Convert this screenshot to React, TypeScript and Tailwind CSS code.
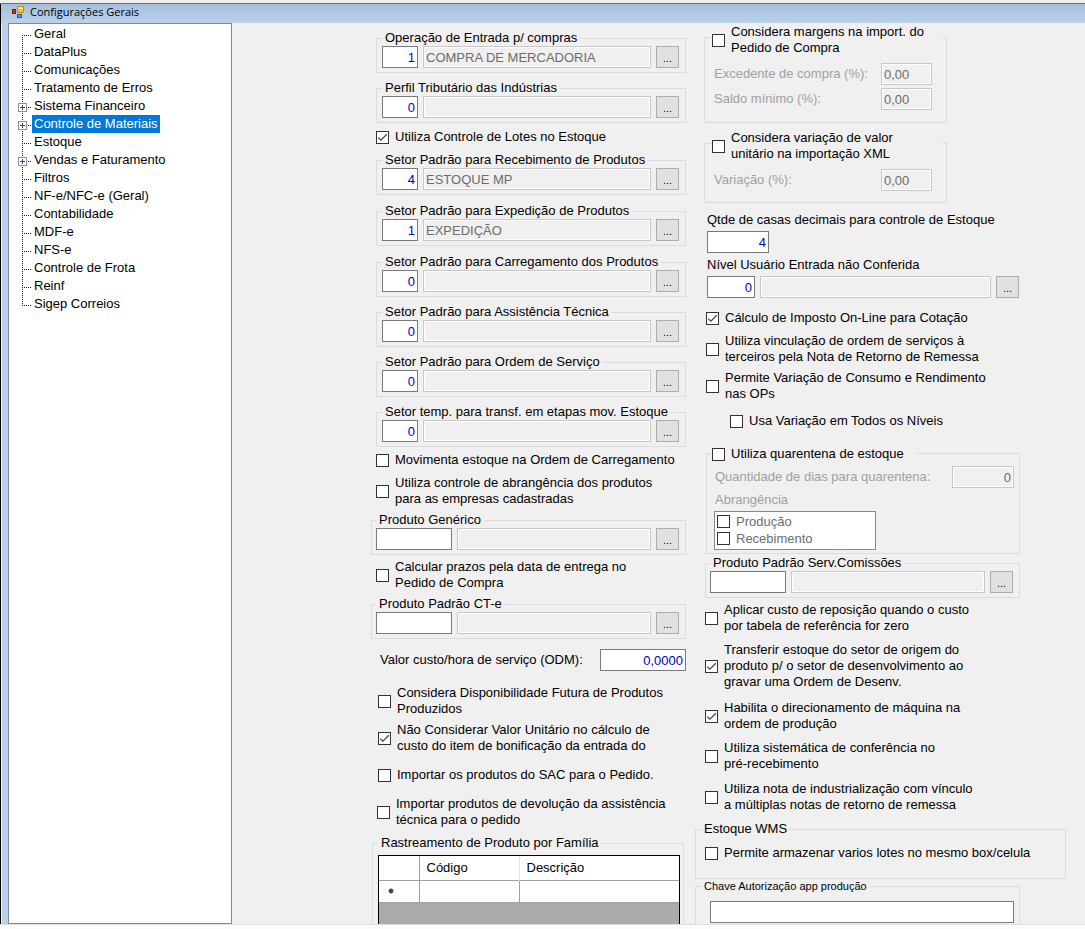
import { useId } from 'react'
import type { ReactNode } from 'react'
import clsx from 'clsx'

// ─── Data ─────────────────────────────────────────────────────────────────────

type TreeItem = { label: string; expandable?: boolean; selected?: boolean }

const TREE: TreeItem[] = [
  { label: 'Geral' },
  { label: 'DataPlus' },
  { label: 'Comunicações' },
  { label: 'Tratamento de Erros' },
  { label: 'Sistema Financeiro', expandable: true },
  { label: 'Controle de Materiais', expandable: true, selected: true },
  { label: 'Estoque' },
  { label: 'Vendas e Faturamento', expandable: true },
  { label: 'Filtros' },
  { label: 'NF-e/NFC-e (Geral)' },
  { label: 'Contabilidade' },
  { label: 'MDF-e' },
  { label: 'NFS-e' },
  { label: 'Controle de Frota' },
  { label: 'Reinf' },
  { label: 'Sigep Correios' },
]

// ─── Basic controls ───────────────────────────────────────────────────────────

interface CheckProps {
  lines: string[]
  checked?: boolean
  className?: string
}

function Check({ lines, checked, className }: CheckProps) {
  return (
    <label className={clsx('flex items-center gap-[6px]', className)}>
      <span className="grid shrink-0">
        <input
          type="checkbox"
          defaultChecked={checked}
          className="peer col-start-1 row-start-1 size-[13px] appearance-none border border-[#333333] bg-white"
        />
        <svg
          viewBox="0 0 13 13"
          className="pointer-events-none invisible col-start-1 row-start-1 size-[13px] peer-checked:visible"
        >
          <path d="M2.2 6.6 4.9 9.2l5.9-5.9" fill="none" stroke="#444" strokeWidth="1.3" />
        </svg>
      </span>
      <span className="whitespace-nowrap">
        {lines.map((line) => (
          <span key={line} className="block">{line}</span>
        ))}
      </span>
    </label>
  )
}

interface BoxProps {
  label?: string
  id?: string
  value?: string
  align?: 'left' | 'right'
  disabled?: boolean
  className?: string
}

function Box({ label, id, value = '', align = 'right', disabled, className }: BoxProps) {
  return (
    <input
      type="text"
      id={id}
      aria-label={label}
      defaultValue={value}
      disabled={disabled}
      className={clsx(
        'h-[22px] min-w-0 border px-[2px]',
        align === 'right' ? 'text-right' : 'text-left',
        disabled
          ? 'border-[#c8c8c8] bg-[#f0f0f0] text-[#6d6d6d] inset-ring inset-ring-white'
          : 'border-[#7a7a7a] bg-white text-[#0000c0]',
        className,
      )}
    />
  )
}

function BrowseButton({ label }: { label: string }) {
  return (
    <button
      type="button"
      aria-label={label}
      className="h-[22px] w-[23px] shrink-0 border border-[#adadad] bg-[#e1e1e1] pt-[2px] text-[11px]"
    >
      ...
    </button>
  )
}

// ─── Group boxes ──────────────────────────────────────────────────────────────

interface LookupProps {
  title: string
  code?: string
  description?: string
  wide?: boolean
  className?: string
}

// Code + description + browse button
function Lookup({ title, code, description, wide, className }: LookupProps) {
  return (
    <fieldset
      className={clsx(
        'min-w-0 border border-[#dcdcdc] pr-[6px] pb-1',
        wide ? 'pl-1' : 'ml-1 pl-[5px]',
        className,
      )}
    >
      <legend className="px-[3px] whitespace-nowrap">{title}</legend>
      <div className="flex gap-[5px]">
        <Box label={title} value={code} className={wide ? 'w-[76px]' : 'w-[36px]'} />
        <Box label={`${title} - descrição`} value={description} align="left" disabled className="flex-1" />
        <BrowseButton label={`Pesquisar ${title}`} />
      </div>
    </fieldset>
  )
}

interface CheckGroupProps {
  lines: string[]
  children: ReactNode
  className?: string
  titleClassName: string
}

// Group box whose title is a checkbox sitting on the top border
function CheckGroup({ lines, children, className, titleClassName }: CheckGroupProps) {
  return (
    <div role="group" aria-label={lines.join(' ')} className={clsx('border border-[#dcdcdc]', className)}>
      <Check lines={lines} className={clsx('bg-[#f0f0f0] pl-px', titleClassName)} />
      {children}
    </div>
  )
}

function PercentRow({ label }: { label: string }) {
  const id = useId()
  return (
    <div className="flex items-center justify-between pr-[14px] pl-[9px]">
      <label htmlFor={id} className="text-[#a0a0a0]">{label}</label>
      <Box id={id} value="0,00" align="left" disabled className="w-[51px]" />
    </div>
  )
}

// ─── Tree ─────────────────────────────────────────────────────────────────────

function TreeBranch({ first, last, expandable }: { first: boolean; last: boolean; expandable?: boolean }) {
  return (
    <svg viewBox="0 0 14 18" className="h-[18px] w-[14px] shrink-0" shapeRendering="crispEdges">
      <path
        d={`M4.5 ${first ? 10 : 0}V${last ? 11 : 18}M4 10.5H13`}
        stroke="#202020"
        strokeDasharray="1 1"
        fill="none"
      />
      {expandable && (
        <>
          <rect x="0.5" y="6.5" width="8" height="8" fill="#fff" stroke="#919191" />
          <path d="M2 10.5h5M4.5 8v5" stroke="#29478f" />
        </>
      )}
    </svg>
  )
}

function Tree() {
  return (
    <nav className="w-[224px] shrink-0 border border-[#828790] bg-white pt-px">
      <ul>
        {TREE.map((item, i) => (
          <li key={item.label} className="flex h-[18px] items-center pl-[9px]">
            <TreeBranch first={i === 0} last={i === TREE.length - 1} expandable={item.expandable} />
            <a
              href="#"
              className={clsx(
                'px-[2px] leading-[18px] whitespace-nowrap',
                item.selected && 'bg-[#0078d7] text-white',
              )}
            >
              {item.label}
            </a>
          </li>
        ))}
      </ul>
    </nav>
  )
}

// ─── Title bar ────────────────────────────────────────────────────────────────

function TitleBar() {
  return (
    <header className="flex h-[19px] items-center gap-[5px] bg-linear-to-b from-[#a5bfdd] to-[#b9d1ea] pb-[3px] pl-[10px]">
      <svg viewBox="0 0 14 14" className="size-[14px]">
        <rect x="1.5" y="4.5" width="3" height="4" fill="#d8342c" stroke="#7d120e" />
        <rect x="6.5" y="1.5" width="6" height="6" fill="#fbc02d" stroke="#c58a12" />
        <rect x="7" y="2" width="5" height="2" fill="#ffe596" />
        <rect x="6.5" y="9.5" width="4" height="3" fill="#5b96ea" stroke="#2457ad" />
      </svg>
      <h1 className="font-['Open_Sans',sans-serif] text-[11px]">Configurações Gerais</h1>
    </header>
  )
}

// ─── Columns ──────────────────────────────────────────────────────────────────

function FamilyTable() {
  return (
    <div className="flex-1 border border-b-0 border-black bg-[#ababab]">
      <table className="w-full table-fixed border-collapse bg-white">
        <thead>
          <tr className="h-[24px] border-b border-[#a0a0a0] text-left">
            <th className="w-[40px] border-r border-[#a0a0a0]" />
            <th className="w-[100px] border-r border-[#e5e5e5] pl-[7px] font-normal">Código</th>
            <th className="pl-[7px] font-normal">Descrição</th>
          </tr>
        </thead>
        <tbody>
          <tr className="h-[22px] border-b border-[#a0a0a0]">
            <td className="border-r border-[#a0a0a0] pl-[9px]">
              <svg viewBox="0 0 6 6" className="size-[6px]">
                <circle cx="3" cy="3" r="2.2" fill="#444" />
                <path d="M3 0v6M0 3h6M1 1l4 4M5 1 1 5" stroke="#444" strokeWidth="0.6" />
              </svg>
            </td>
            <td className="border-r border-[#a0a0a0]" />
            <td />
          </tr>
        </tbody>
      </table>
    </div>
  )
}

function LeftColumn() {
  return (
    <div className="flex w-[314px] shrink-0 flex-col pt-[7px]">
      <Lookup title="Operação de Entrada p/ compras" code="1" description="COMPRA DE MERCADORIA" />
      <Lookup title="Perfil Tributário das Indústrias" code="0" className="mt-[7px]" />
      <Check lines={['Utiliza Controle de Lotes no Estoque']} checked className="mt-[6px] ml-1" />
      <Lookup title="Setor Padrão para Recebimento de Produtos" code="4" description="ESTOQUE MP" className="mt-[7px]" />
      <Lookup title="Setor Padrão para Expedição de Produtos" code="1" description="EXPEDIÇÃO" className="mt-[8px]" />
      <Lookup title="Setor Padrão para Carregamento dos Produtos" code="0" className="mt-[8px]" />
      <Lookup title="Setor Padrão para Assistência Técnica" code="0" className="mt-[7px]" />
      <Lookup title="Setor Padrão para Ordem de Serviço" code="0" className="mt-[7px]" />
      <Lookup title="Setor temp. para transf. em etapas mov. Estoque" code="0" className="mt-[7px]" />
      <Check lines={['Movimenta estoque na Ordem de Carregamento']} className="mt-[5px] ml-1" />
      <Check
        lines={['Utiliza controle de abrangência dos produtos', 'para as empresas cadastradas']}
        className="mt-[7px] ml-1"
      />
      <Lookup title="Produto Genérico" wide className="mt-[5px] -ml-px" />
      <Check lines={['Calcular prazos pela data de entrega no', 'Pedido de Compra']} className="mt-[4px] ml-1" />
      <Lookup title="Produto Padrão CT-e" wide className="mt-[5px] -ml-px" />
      <div className="mt-[10px] flex items-center justify-between pl-[8px]">
        <label htmlFor="custo-hora" className="whitespace-nowrap">Valor custo/hora de serviço (ODM):</label>
        <Box id="custo-hora" value="0,0000" className="w-[86px]" />
      </div>
      <Check
        lines={['Considera Disponibilidade Futura de Produtos', 'Produzidos']}
        className="mt-[14px] ml-[6px]"
      />
      <Check
        lines={['Não Considerar Valor Unitário no cálculo de', 'custo do item de bonificação da entrada do']}
        checked
        className="mt-[5px] ml-[6px]"
      />
      <Check lines={['Importar os produtos do SAC para o Pedido.']} className="mt-[13px] ml-[6px]" />
      <Check
        lines={['Importar produtos de devolução da assistência', 'técnica para o pedido']}
        className="mt-[13px] ml-[5px]"
      />
      <fieldset className="mt-[7px] mr-[2px] flex flex-1 flex-col border border-b-0 border-[#dcdcdc] pt-[4px] pr-[3px] pl-[5px]">
        <legend className="px-[3px]">Rastreamento de Produto por Família</legend>
        <FamilyTable />
      </fieldset>
    </div>
  )
}

function RightColumn() {
  return (
    <div className="flex max-w-[371px] flex-1 flex-col pt-[14px]">
      <CheckGroup
        lines={['Considera margens na import. do', 'Pedido de Compra']}
        className="ml-[9px] w-[243px] pb-[12px]"
        titleClassName="-mt-[14px] ml-[6px] mr-[4px]"
      >
        <div className="mt-[7px] flex flex-col gap-[3px]">
          <PercentRow label="Excedente de compra (%):" />
          <PercentRow label="Saldo mínimo (%):" />
        </div>
      </CheckGroup>
      <CheckGroup
        lines={['Considera variação de valor', 'unitário na importação XML']}
        className="mt-[20px] ml-[9px] w-[243px] pb-[11px]"
        titleClassName="-mt-[14px] ml-[6px] mr-[4px]"
      >
        <div className="mt-[7px]">
          <PercentRow label="Variação (%):" />
        </div>
      </CheckGroup>

      <div className="mt-[9px] flex flex-col items-start gap-[3px] pl-[12px]">
        <label htmlFor="casas-decimais">Qtde de casas decimais para controle de Estoque</label>
        <Box id="casas-decimais" value="4" className="w-[62px]" />
      </div>
      <div className="mt-[4px] mr-[47px] flex flex-col gap-[3px] pl-[12px]">
        <label htmlFor="nivel-usuario">Nível Usuário Entrada não Conferida</label>
        <div className="flex gap-[5px]">
          <Box id="nivel-usuario" value="0" className="w-[48px]" />
          <Box label="Nível de usuário - descrição" disabled className="flex-1" />
          <BrowseButton label="Pesquisar nível de usuário" />
        </div>
      </div>

      <Check lines={['Cálculo de Imposto On-Line para Cotação']} checked className="mt-[12px] ml-[11px]" />
      <Check
        lines={['Utiliza vinculação de ordem de serviços à', 'terceiros pela Nota de Retorno de Remessa']}
        className="mt-[7px] ml-[11px]"
      />
      <Check
        lines={['Permite Variação de Consumo e Rendimento', 'nas OPs']}
        className="mt-[5px] ml-[11px]"
      />
      <Check lines={['Usa Variação em Todos os Níveis']} className="mt-[11px] ml-[35px]" />

      <CheckGroup
        lines={['Utiliza quarentena de estoque']}
        className="mt-[24px] mr-[46px] ml-[11px] pb-[3px]"
        titleClassName="-mt-[8px] ml-[4px] w-[206px]"
      >
        <div className="mt-[4px] flex items-center justify-between pr-[5px] pl-[8px]">
          <label htmlFor="dias-quarentena" className="text-[#a0a0a0]">Quantidade de dias para quarentena:</label>
          <Box id="dias-quarentena" value="0" disabled className="w-[62px]" />
        </div>
        <p className="mt-[4px] pl-[8px] text-[#a0a0a0]">Abrangência</p>
        <div className="mt-[3px] ml-[7px] w-[162px] border border-[#828790] bg-white pt-px pb-[2px] pl-[2px] text-[#6d6d6d]">
          <Check lines={['Produção']} className="h-[17px]" />
          <Check lines={['Recebimento']} className="h-[17px]" />
        </div>
      </CheckGroup>
      <Lookup title="Produto Padrão Serv.Comissões" wide className="mt-px mr-[46px] ml-[10px]" />

      <Check
        lines={['Aplicar custo de reposição quando o custo', 'por tabela de referência for zero']}
        className="mt-[4px] ml-[10px]"
      />
      <Check
        lines={['Transferir estoque do setor de origem do', 'produto p/ o setor de desenvolvimento ao', 'gravar uma Ordem de Desenv.']}
        checked
        className="mt-[8px] ml-[10px]"
      />
      <Check
        lines={['Habilita o direcionamento de máquina na', 'ordem de produção']}
        checked
        className="mt-[10px] ml-[10px]"
      />
      <Check lines={['Utiliza sistemática de conferência no', 'pré-recebimento']} className="mt-[8px] ml-[10px]" />
      <Check
        lines={['Utiliza nota de industrialização com vínculo', 'a múltiplas notas de retorno de remessa']}
        className="mt-[9px] ml-[10px]"
      />

      <fieldset className="mt-[8px] min-w-0 border border-[#dcdcdc] pt-[8px] pb-[17px] pl-[9px]">
        <legend className="-ml-[3px] px-[2px]">Estoque WMS</legend>
        <Check lines={['Permite armazenar varios lotes no mesmo box/celula']} />
      </fieldset>
      <fieldset className="mr-[46px] min-w-0 flex-1 border border-b-0 border-[#dcdcdc] px-[5px] pt-[8px] pl-[14px]">
        <legend className="-ml-[9px] px-[3px] text-[11px] leading-[14px]">Chave Autorização app produção</legend>
        <Box label="Chave Autorização app produção" align="left" className="block w-full" />
      </fieldset>
    </div>
  )
}

// ─── App ──────────────────────────────────────────────────────────────────────

export default function App() {
  return (
    <div className="flex min-h-screen flex-col bg-[#f0f0f0] font-['Liberation_Sans',Arial,sans-serif] text-[13px] leading-[16px] text-black">
      <div className="h-[4px] border-b border-[#6e6e6e] bg-[#eeeeee]" />
      <div className="flex flex-1 flex-col border-l border-black">
        <TitleBar />
        <main className="flex flex-1">
          <div className="w-[7px] shrink-0 border-l border-[#f0f0f0] bg-[#b9d1ea]" />
          <Tree />
          <div className="flex flex-1 gap-[9px] pl-[140px]">
            <LeftColumn />
            <RightColumn />
          </div>
        </main>
      </div>
      <div className="h-[5px] border-t border-[#dedede] bg-[#fcfcfc]" />
    </div>
  )
}
